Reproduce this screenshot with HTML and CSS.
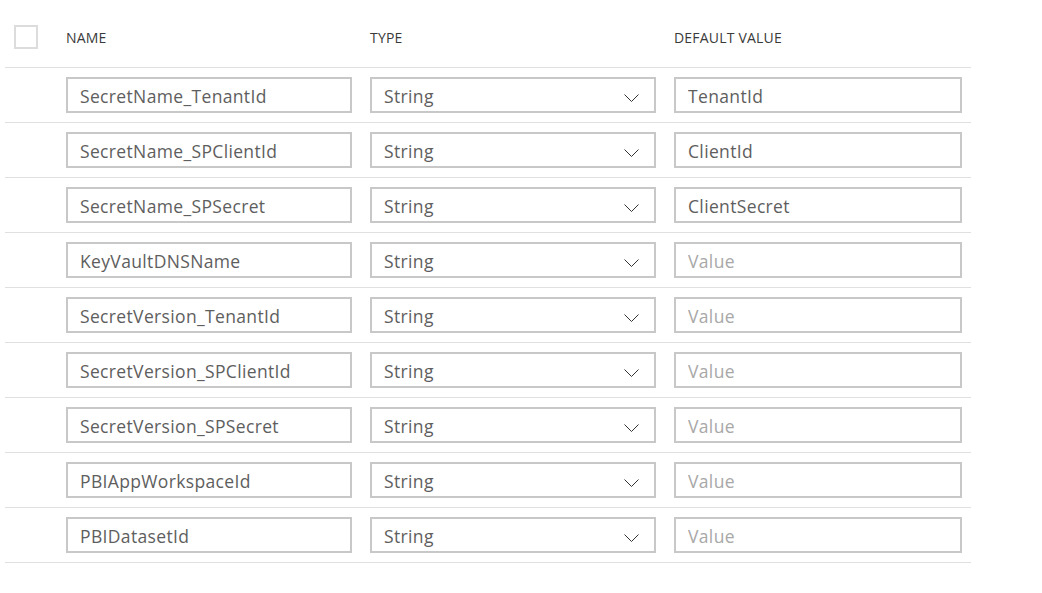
FILE: index.html
```html
<!DOCTYPE html>
<html>
<head>
    <link rel="stylesheet" href="styles.css">
    <title>Parameters</title>
</head>
<body>
    <div class="params">
        <div class="params-head">
            <div><span class="check"></span></div>
            <div class="col-title">Name</div>
            <div class="col-title">Type</div>
            <div class="col-title">Default value</div>
        </div>

        <div class="param-row">
            <div></div>
            <input class="field" type="text" value="SecretName_TenantId">
            <div class="select"><span>String</span><svg width="15" height="9" viewBox="0 0 15 9"><polyline points="0.5,0.5 7.5,7.5 14.5,0.5"/></svg></div>
            <input class="field" type="text" value="TenantId" placeholder="Value">
        </div>
        <div class="param-row">
            <div></div>
            <input class="field" type="text" value="SecretName_SPClientId">
            <div class="select"><span>String</span><svg width="15" height="9" viewBox="0 0 15 9"><polyline points="0.5,0.5 7.5,7.5 14.5,0.5"/></svg></div>
            <input class="field" type="text" value="ClientId" placeholder="Value">
        </div>
        <div class="param-row">
            <div></div>
            <input class="field" type="text" value="SecretName_SPSecret">
            <div class="select"><span>String</span><svg width="15" height="9" viewBox="0 0 15 9"><polyline points="0.5,0.5 7.5,7.5 14.5,0.5"/></svg></div>
            <input class="field" type="text" value="ClientSecret" placeholder="Value">
        </div>
        <div class="param-row">
            <div></div>
            <input class="field" type="text" value="KeyVaultDNSName">
            <div class="select"><span>String</span><svg width="15" height="9" viewBox="0 0 15 9"><polyline points="0.5,0.5 7.5,7.5 14.5,0.5"/></svg></div>
            <input class="field" type="text" placeholder="Value">
        </div>
        <div class="param-row">
            <div></div>
            <input class="field" type="text" value="SecretVersion_TenantId">
            <div class="select"><span>String</span><svg width="15" height="9" viewBox="0 0 15 9"><polyline points="0.5,0.5 7.5,7.5 14.5,0.5"/></svg></div>
            <input class="field" type="text" placeholder="Value">
        </div>
        <div class="param-row">
            <div></div>
            <input class="field" type="text" value="SecretVersion_SPClientId">
            <div class="select"><span>String</span><svg width="15" height="9" viewBox="0 0 15 9"><polyline points="0.5,0.5 7.5,7.5 14.5,0.5"/></svg></div>
            <input class="field" type="text" placeholder="Value">
        </div>
        <div class="param-row">
            <div></div>
            <input class="field" type="text" value="SecretVersion_SPSecret">
            <div class="select"><span>String</span><svg width="15" height="9" viewBox="0 0 15 9"><polyline points="0.5,0.5 7.5,7.5 14.5,0.5"/></svg></div>
            <input class="field" type="text" placeholder="Value">
        </div>
        <div class="param-row">
            <div></div>
            <input class="field" type="text" value="PBIAppWorkspaceId">
            <div class="select"><span>String</span><svg width="15" height="9" viewBox="0 0 15 9"><polyline points="0.5,0.5 7.5,7.5 14.5,0.5"/></svg></div>
            <input class="field" type="text" placeholder="Value">
        </div>
        <div class="param-row">
            <div></div>
            <input class="field" type="text" value="PBIDatasetId">
            <div class="select"><span>String</span><svg width="15" height="9" viewBox="0 0 15 9"><polyline points="0.5,0.5 7.5,7.5 14.5,0.5"/></svg></div>
            <input class="field" type="text" placeholder="Value">
        </div>
    </div>
</body>
</html>
```

FILE: styles.css
```css
body{
    margin: 0;
    background: #fff;
    font-family: "Open Sans", "Noto Sans", sans-serif;
}

.params{
    margin-left: 5px;
    width: 966px;
}

.params-head, .param-row{
    display: grid;
    grid-template-columns: 43px 286px 286px 288px;
    column-gap: 18px;
    border-bottom: 1px solid #e0e0e0;
}

.params-head{
    height: 61px;
    padding-top: 6px;
    align-items: center;
}

.check{
    display: block;
    width: 24px;
    height: 24px;
    margin-left: 9px;
    border: 2px solid #dcdcdc;
    box-sizing: border-box;
}

.col-title{
    font-size: 14px;
    letter-spacing: 0.2px;
    text-transform: uppercase;
    color: #3a3a3a;
    padding-top: 2px;
}

.param-row{
    padding: 9px 0;
}

.field, .select{
    height: 36px;
    margin: 0;
    padding: 2px 12px 0;
    border: 2px solid #c8c8c8;
    box-sizing: border-box;
    font-family: "Open Sans", "Noto Sans", sans-serif;
    font-size: 17.5px;
    letter-spacing: 0.35px;
    color: #5e5e5e;
    background: #fff;
    outline: none;
}

.field::placeholder{
    color: #a8a8a8;
}

.select{
    display: flex;
    align-items: center;
    justify-content: space-between;
    padding-right: 15px;
}

.select svg{
    margin-top: 4px;
    fill: none;
    stroke: #333;
    stroke-width: 1;
}
```
